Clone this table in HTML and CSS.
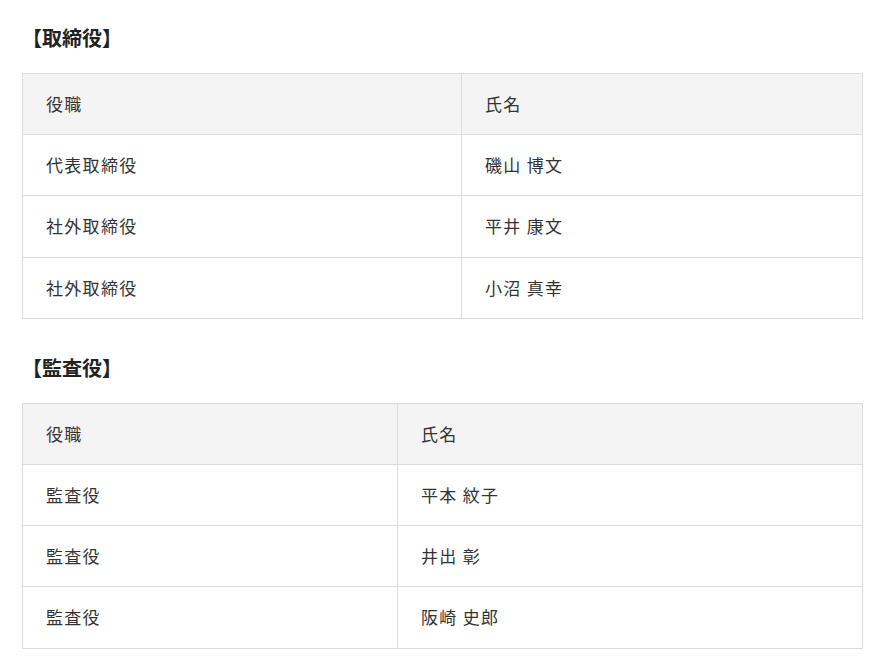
FILE: index.html
```html
<!DOCTYPE html>
<html lang="ja">
<head>
<meta charset="utf-8">
<link rel="stylesheet" href="styles.css">
</head>
<body>
<div class="page">
  <h2 class="title">【取締役】</h2>
  <table class="tbl tbl-board">
    <colgroup><col class="c1"><col class="c2"></colgroup>
    <thead><tr><th>役職</th><th>氏名</th></tr></thead>
    <tbody>
      <tr><td>代表取締役</td><td>磯山 博文</td></tr>
      <tr><td>社外取締役</td><td>平井 康文</td></tr>
      <tr><td>社外取締役</td><td>小沼 真幸</td></tr>
    </tbody>
  </table>
  <h2 class="title second">【監査役】</h2>
  <table class="tbl tbl-audit">
    <colgroup><col class="c1"><col class="c2"></colgroup>
    <thead><tr><th>役職</th><th>氏名</th></tr></thead>
    <tbody>
      <tr><td>監査役</td><td>平本 紋子</td></tr>
      <tr><td>監査役</td><td>井出 彰</td></tr>
      <tr><td>監査役</td><td>阪崎 史郎</td></tr>
    </tbody>
  </table>
</div>
</body>
</html>
```
FILE: styles.css
```css
html, body {
  margin: 0;
  padding: 0;
  background: #fff;
}
body {
  font-family: "Noto Sans CJK JP", "Noto Sans", sans-serif;
  color: #333;
}
.page {
  padding: 23px 16px 0 22px;
  width: 840px;
}
.title {
  margin: 0 0 20px 0;
  font-size: 20px;
  line-height: 30px;
  font-weight: 700;
  color: #222;
}
.title.second {
  margin-top: 34px;
}
.tbl {
  width: 840px;
  border-collapse: collapse;
  table-layout: fixed;
  font-size: 17px;
  letter-spacing: 1.3px;
}
.tbl th, .tbl td {
  border: 1px solid #dcdcdc;
  padding: 18px 23px;
  line-height: 24.2px;
  text-align: left;
  font-weight: 400;
  vertical-align: middle;
}
.tbl th {
  background: #f4f4f4;
}
.tbl-board .c1 { width: 439px; }
.tbl-board .c2 { width: 401px; }
.tbl-audit .c1 { width: 375px; }
.tbl-audit .c2 { width: 465px; }
```
